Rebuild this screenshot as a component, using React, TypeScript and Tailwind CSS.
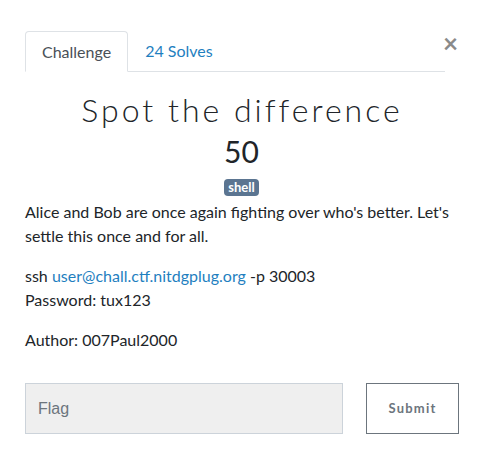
import React from 'react';

export default function App() {
  return (
    <div className="relative w-[480px] h-[476px] bg-white text-[#212529] font-['Lato','Liberation_Sans',sans-serif]">
      <button className="absolute left-[443px] top-[30px] text-[26px] leading-none font-bold text-[#8a8a8a]">
        ×
      </button>

      <div className="ml-[25px] mr-[22px] pt-[31px]">
        <div className="mr-[13px] flex border-b border-[#dee2e6]">
          <div className="-mb-px h-[41px] px-[16px] flex items-center border border-[#dee2e6] border-b-white rounded-t-[4px] text-[16px] text-[#495057]">
            Challenge
          </div>
          <div className="h-[40px] px-[17px] flex items-center text-[16px] text-[#1f7fbf]">24 Solves</div>
        </div>

        <h2 className="mt-[19px] pl-[1px] text-center text-[32px] leading-[38px] font-light tracking-[3px] text-[#212529]">
          Spot the difference
        </h2>
        <h3 className="mt-[4px] text-center text-[30px] leading-[36px] text-[#212529]">50</h3>
        <div className="mt-[10px] flex justify-center">
          <span className="h-[17px] px-[4px] flex items-center rounded-[4px] bg-[#5b7591] text-white text-[13px] leading-none font-bold">
            shell
          </span>
        </div>

        <div className="mt-[4px] text-[16px] leading-[24px]">
          <p>Alice and Bob are once again fighting over who's better. Let's settle this once and for all.</p>
          <p className="mt-[16px]">
            ssh <a className="text-[#1f7fbf]">user@chall.ctf.nitdgplug.org</a> -p 30003
            <br />
            Password: tux123
          </p>
          <p className="mt-[16px]">Author: 007Paul2000</p>
        </div>
      </div>

      <div className="mt-[31px] ml-[25px] flex gap-[23px]">
        <input
          placeholder="Flag"
          className="w-[318px] h-[51px] px-[12px] bg-[#efefef] border border-[#ccd3da] text-[16px] font-['Liberation_Sans',sans-serif] placeholder:text-[#6c757d] outline-none"
        />
        <button className="w-[93px] h-[51px] border border-[#6c757d] text-[13px] font-bold tracking-[1.2px] text-[#6c757d] font-['Lato',sans-serif]">
          Submit
        </button>
      </div>
    </div>
  );
}
